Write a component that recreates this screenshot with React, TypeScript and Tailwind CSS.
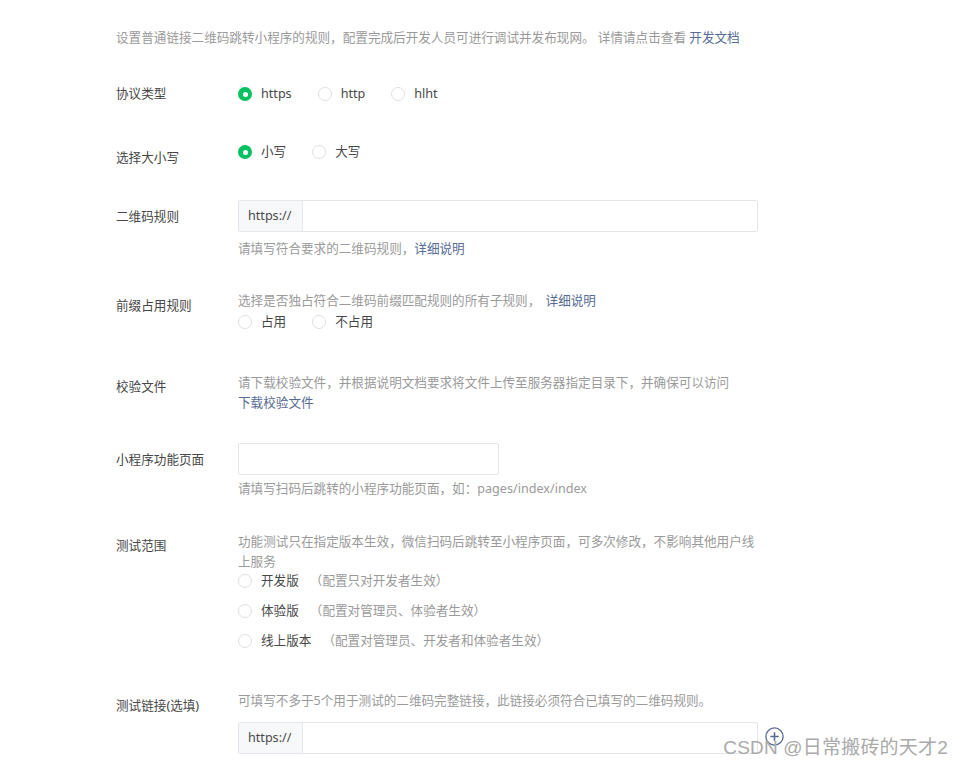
import { ReactNode } from "react";

const FONT = "font-['Noto_Sans','Noto_Sans_CJK_SC',sans-serif]";

// radio dot
const Radio = ({ checked, label, note }: { checked?: boolean; label: string; note?: string }) => (
  <label className="flex items-center h-[20px] mr-[26px]">
    {checked ? (
      <span className="w-[14px] h-[14px] rounded-full bg-[#07c160] flex items-center justify-center">
        <span className="w-[5px] h-[5px] rounded-full bg-white" />
      </span>
    ) : (
      <span className="w-[14px] h-[14px] rounded-full border border-[#e0e0e0] bg-white" />
    )}
    <span className="ml-[9px] text-[#474747]">{label}</span>
    {note && <span className="ml-[11px] text-[#9a9a9a]">{note}</span>}
  </label>
);

type RowProps = {
  label: string;
  labelTop: string;
  className?: string;
  children: ReactNode;
};

const Row = ({ label, labelTop, className, children }: RowProps) => (
  <div className={`flex items-start ${className ?? ""}`}>
    <div className={`w-[122px] shrink-0 leading-[20px] text-[#474747] ${labelTop}`}>{label}</div>
    <div className="w-[520px] leading-[20px]">{children}</div>
  </div>
);

const PrefixInput = () => (
  <div className="flex h-[32px] w-[520px] border border-[#e4e6eb] rounded-[2px] bg-white">
    <div className="w-[64px] shrink-0 bg-[#f6f8f9] border-r border-[#e4e6eb] flex items-center pl-[9px] text-[#4a4a4a]">
      https://
    </div>
    <div className="flex-1" />
  </div>
);

const Hint = ({ children, className }: { children: ReactNode; className?: string }) => (
  <p className={`text-[#9a9a9a] leading-[20px] ${className ?? ""}`}>{children}</p>
);

const Link = ({ children, className }: { children: ReactNode; className?: string }) => (
  <a className={`text-[#576b95] ${className ?? ""}`}>{children}</a>
);

export default function App() {
  return (
    <div className={`relative h-[768px] w-[963px] overflow-hidden bg-white text-[12.6px] ${FONT}`}>
      <div className="pl-[116px] pt-[28px]">
        {/* intro */}
        <Hint>
          设置普通链接二维码跳转小程序的规则，配置完成后开发人员可进行调试并发布现网。 详情请点击查看 <Link>开发文档</Link>
        </Hint>

        <Row label="协议类型" labelTop="pt-0" className="mt-[36px]">
          <div className="flex">
            <Radio checked label="https" />
            <Radio label="http" />
            <Radio label="hlht" />
          </div>
        </Row>

        <Row label="选择大小写" labelTop="pt-[6px]" className="mt-[38px]">
          <div className="flex">
            <Radio checked label="小写" />
            <Radio label="大写" />
          </div>
        </Row>

        <Row label="二维码规则" labelTop="pt-[7px]" className="mt-[32px]">
          <PrefixInput />
          <Hint className="mt-[7px]">
            请填写符合要求的二维码规则，<Link>详细说明</Link>
          </Hint>
        </Row>

        <Row label="前缀占用规则" labelTop="pt-[5px]" className="mt-[32px]">
          <Hint>
            选择是否独占符合二维码前缀匹配规则的所有子规则， <Link className="ml-[2px]">详细说明</Link>
          </Hint>
          <div className="flex mt-[1px]">
            <Radio label="占用" />
            <Radio label="不占用" />
          </div>
        </Row>

        <Row label="校验文件" labelTop="pt-[4px]" className="mt-[41px]">
          <Hint>请下载校验文件，并根据说明文档要求将文件上传至服务器指定目录下，并确保可以访问</Hint>
          <Link className="block">下载校验文件</Link>
        </Row>

        <Row label="小程序功能页面" labelTop="pt-[7px]" className="mt-[30px]">
          <div className="h-[32px] w-[261px] border border-[#e4e6eb] rounded-[2px]" />
          <Hint className="mt-[4px]">请填写扫码后跳转的小程序功能页面，如：pages/index/index</Hint>
        </Row>

        <Row label="测试范围" labelTop="pt-[4px]" className="mt-[33px]">
          <Hint>功能测试只在指定版本生效，微信扫码后跳转至小程序页面，可多次修改，不影响其他用户线上服务</Hint>
          <div className="flex flex-col gap-[10px] mt-[-1px]">
            <Radio label="开发版" note="（配置只对开发者生效）" />
            <Radio label="体验版" note="（配置对管理员、体验者生效）" />
            <Radio label="线上版本" note="（配置对管理员、开发者和体验者生效）" />
          </div>
        </Row>

        <Row label="测试链接(选填)" labelTop="pt-[5px]" className="mt-[40px]">
          <Hint>可填写不多于5个用于测试的二维码完整链接，此链接必须符合已填写的二维码规则。</Hint>
          <div className="relative mt-[11px]">
            <PrefixInput />
            <svg
              className="absolute left-[527px] top-[5px]"
              width="19"
              height="19"
              viewBox="0 0 19 19"
              fill="none"
              stroke="#576b95"
              strokeWidth="1.3"
            >
              <circle cx="9.5" cy="9.5" r="8.6" />
              <path d="M9.5 5.3v8.4M5.3 9.5h8.4" strokeWidth="1.6" />
            </svg>
          </div>
        </Row>
      </div>

      {/* watermark */}
      <div className="absolute right-[15px] top-[735px] text-[19px] leading-[26px] text-[#aaaaaa] tracking-[0.2px] font-['Liberation_Sans_Narrow','Liberation_Sans','Noto_Sans_CJK_SC',sans-serif]">
        CSDN @日常搬砖的天才2
      </div>
    </div>
  );
}
